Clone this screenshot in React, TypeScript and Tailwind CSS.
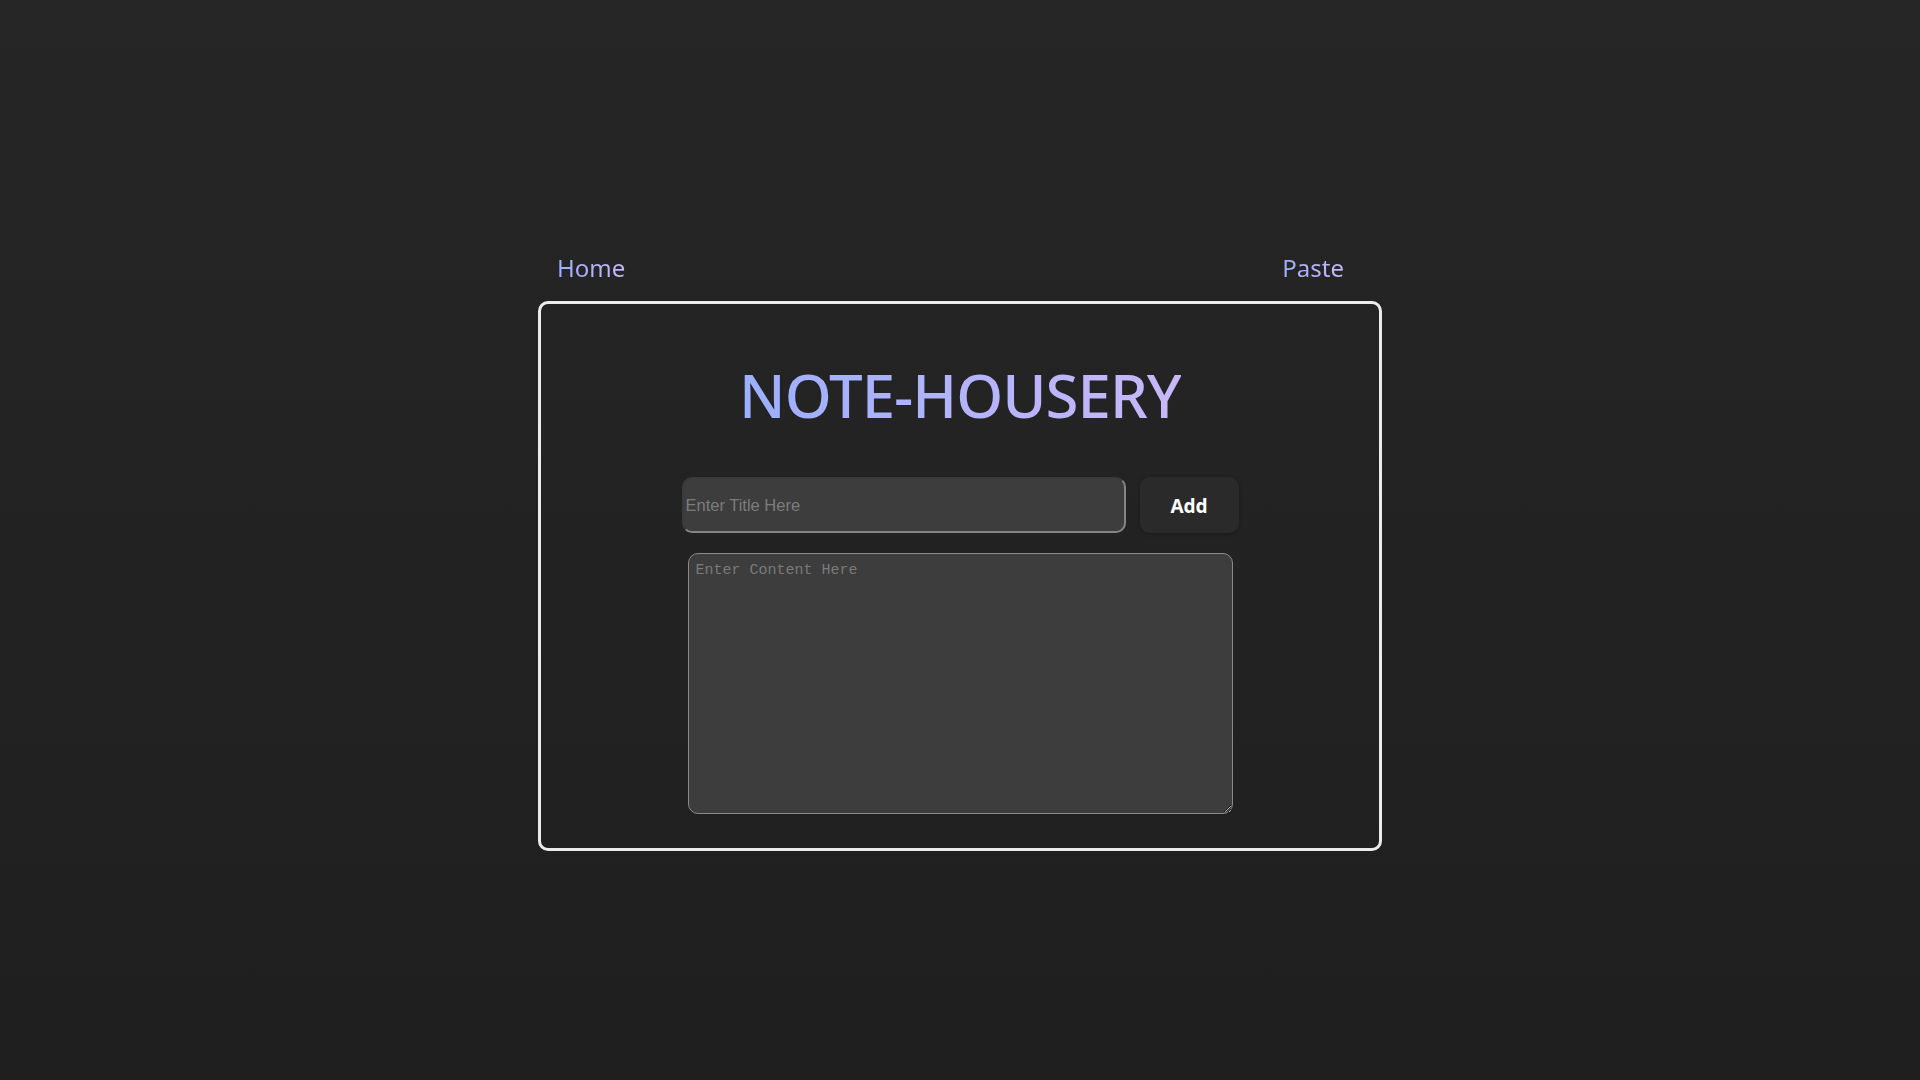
import React from "react";

export default function App() {
  const grad =
    "bg-gradient-to-r from-[#9cafff] to-[#c8b8f8] bg-clip-text text-transparent";
  return (
    <div
      className="min-h-screen w-full bg-gradient-to-b from-[#262626] to-[#1f1f1f] flex flex-col items-center pt-[252px]"
      style={{ fontFamily: '"Noto Sans", "Open Sans", sans-serif' }}
    >
      <div className="w-[844px] flex flex-col">
        <nav className="flex justify-between pl-[19px] pr-[38px] h-[32px] mb-[17px]">
          <a className={`text-[24px] leading-[32px] ${grad}`}>Home</a>
          <a className={`text-[24px] leading-[32px] ${grad}`}>Paste</a>
        </nav>
        <div className="border-[3px] border-[#ececec] rounded-[10px] h-[550px] flex flex-col items-center pt-[61px]">
          <h1
            className={`text-[60px] leading-[60px] font-medium tracking-[-1px] ${grad} h-[60px]`}
          >
            NOTE-HOUSERY
          </h1>
          <div className="flex gap-[14px] mt-[52px]">
            <input
              placeholder="Enter Title Here"
              className="w-[444px] h-[56px] rounded-[10px] bg-[#3d3d3d] border-2 border-t-[#3a3a3a] border-l-[#3a3a3a] border-b-[#858585] border-r-[#858585] pl-[2px] text-[16.5px] text-white placeholder:text-[#7c7c7c] outline-none"
              style={{ fontFamily: '"Liberation Sans", Arial, sans-serif' }}
            />
            <button className="w-[99px] h-[56px] rounded-[10px] bg-[#2a2a2a] text-white text-[19px] font-bold pt-[2px] shadow-[0_1px_4px_rgba(0,0,0,0.25)]">
              Add
            </button>
          </div>
          <textarea
            placeholder="Enter Content Here"
            className="mt-[20px] w-[545px] h-[261px] rounded-[10px] bg-[#3d3d3d] border border-[#8a8a8a] px-[7px] pt-[6px] pb-[4px] text-[15px] text-white placeholder:text-[#7a7a7a] outline-none"
            style={{ fontFamily: '"Liberation Mono", "DejaVu Sans Mono", monospace' }}
          />
        </div>
      </div>
    </div>
  );
}
